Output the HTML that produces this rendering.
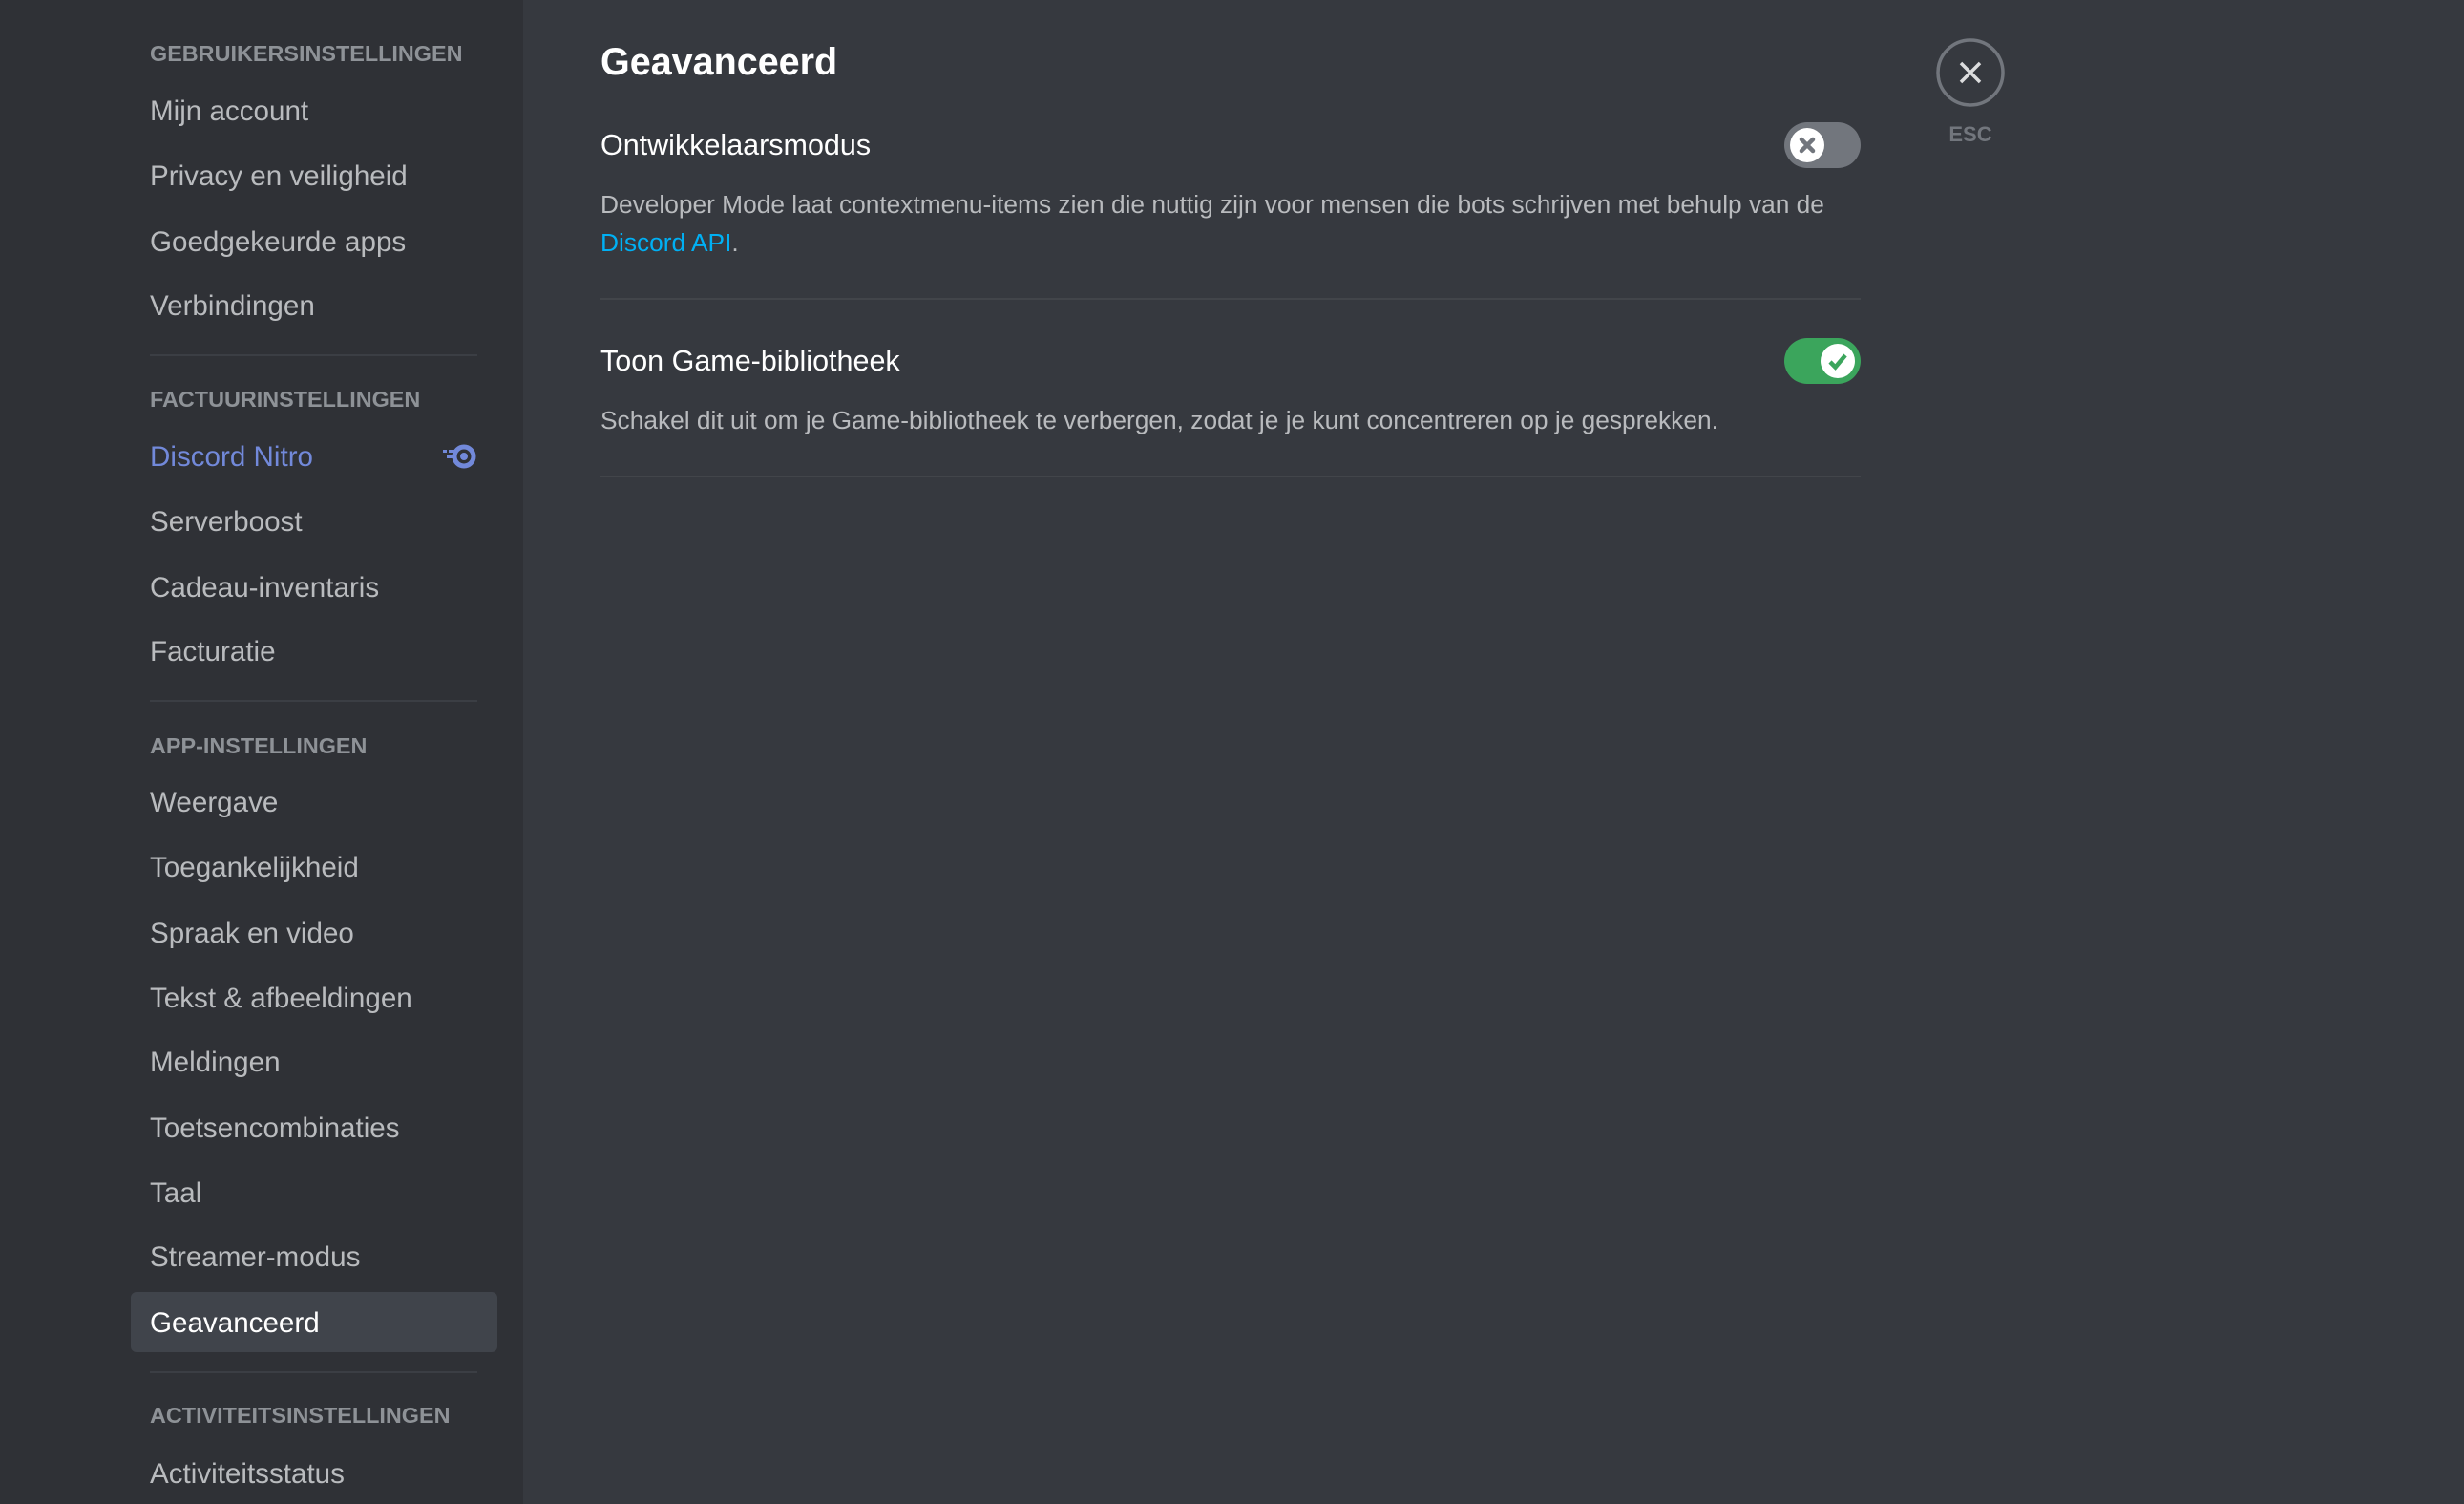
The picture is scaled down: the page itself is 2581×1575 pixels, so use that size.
<!DOCTYPE html>
<html><head><meta charset="utf-8"><style>
*{margin:0;padding:0;box-sizing:border-box}
body{width:2581px;height:1575px;background:#36393f;font-family:"Liberation Sans",sans-serif;position:relative;overflow:hidden}
#side{position:absolute;left:0;top:0;width:548px;height:1575px;background:#2f3136}
.h{position:absolute;left:157px;font-size:23.4px;font-weight:bold;color:#8e9297;line-height:30px;margin-top:-13px}
.i{position:absolute;left:157px;font-size:29.6px;color:#b9bbbe;line-height:40px;margin-top:-18px}
.sep{position:absolute;left:157px;width:343px;height:2px;background:#3b3e44}
.sel{position:absolute;left:137px;top:1353px;width:384px;height:63px;background:#40444b;border-radius:6px}
.t{position:absolute;left:629px;color:#fff}
.d{position:absolute;left:629px;font-size:26.3px;color:#b9bbbe;line-height:40px}
.rule{position:absolute;left:629px;width:1320px;height:2px;background:#42454a}
.tg{position:absolute;left:1869px;width:80px;height:48px;border-radius:24px}
</style></head><body>
<div id="side">
<div class="h" style="top:54px">GEBRUIKERSINSTELLINGEN</div>
<div class="i" style="top:115px">Mijn account</div>
<div class="i" style="top:183px">Privacy en veiligheid</div>
<div class="i" style="top:252px">Goedgekeurde apps</div>
<div class="i" style="top:319px">Verbindingen</div>
<div class="sep" style="top:371px"></div>
<div class="h" style="top:416px">FACTUURINSTELLINGEN</div>
<div class="i" style="top:477px;color:#7289da">Discord Nitro</div>
<svg style="position:absolute;left:462px;top:464px" width="38" height="28" viewBox="0 0 38 28"><circle cx="24" cy="14" r="10" fill="none" stroke="#7289da" stroke-width="5"/><circle cx="24" cy="14" r="4" fill="#7289da"/><rect x="2" y="7" width="4" height="3" fill="#7289da"/><rect x="8" y="7" width="8" height="3" fill="#7289da"/><rect x="6" y="13" width="8" height="3" fill="#7289da"/></svg>
<div class="i" style="top:545px">Serverboost</div>
<div class="i" style="top:614px">Cadeau-inventaris</div>
<div class="i" style="top:681px">Facturatie</div>
<div class="sep" style="top:733px"></div>
<div class="h" style="top:779px">APP-INSTELLINGEN</div>
<div class="i" style="top:839px">Weergave</div>
<div class="i" style="top:907px">Toegankelijkheid</div>
<div class="i" style="top:976px">Spraak en video</div>
<div class="i" style="top:1044px">Tekst &amp; afbeeldingen</div>
<div class="i" style="top:1111px">Meldingen</div>
<div class="i" style="top:1180px">Toetsencombinaties</div>
<div class="i" style="top:1248px">Taal</div>
<div class="i" style="top:1315px">Streamer-modus</div>
<div class="sel"></div>
<div class="i" style="top:1384px;color:#fff">Geavanceerd</div>
<div class="sep" style="top:1436px"></div>
<div class="h" style="top:1480px">ACTIVITEITSINSTELLINGEN</div>
<div class="i" style="top:1542px">Activiteitsstatus</div>
</div>

<div class="t" style="top:42px;font-size:39.5px;font-weight:bold;line-height:46px">Geavanceerd</div>
<div class="t" style="top:135px;font-size:30.5px;line-height:34px">Ontwikkelaarsmodus</div>
<div class="d" style="top:194px">Developer Mode laat contextmenu-items zien die nuttig zijn voor mensen die bots schrijven met behulp van de<br><span style="color:#00b0f4">Discord API</span>.</div>
<div class="rule" style="top:312px"></div>
<div class="t" style="top:361px;font-size:30.5px;line-height:34px">Toon Game-bibliotheek</div>
<div class="d" style="top:420px">Schakel dit uit om je Game-bibliotheek te verbergen, zodat je je kunt concentreren op je gesprekken.</div>
<div class="rule" style="top:498px"></div>

<div class="tg" style="top:128px;background:#72767d"><svg style="position:absolute;left:6px;top:6px" width="36" height="36" viewBox="0 0 36 36"><circle cx="18" cy="18" r="18" fill="#fff"/><path d="M12 12L24 24M24 12L12 24" stroke="#72767d" stroke-width="4.5" stroke-linecap="round"/></svg></div>
<div class="tg" style="top:354px;background:#3ba55c"><svg style="position:absolute;left:38px;top:6px" width="36" height="36" viewBox="0 0 36 36"><circle cx="18" cy="18" r="18" fill="#fff"/><path d="M10 19L15.5 24.5L26 12" fill="none" stroke="#3ba55c" stroke-width="4.5"/></svg></div>

<svg style="position:absolute;left:2028px;top:40px" width="72" height="72" viewBox="0 0 72 72"><circle cx="36" cy="36" r="34" fill="none" stroke="#72767d" stroke-width="3.5"/><path d="M26 26L46 46M46 26L26 46" stroke="#dcddde" stroke-width="3.5"/></svg>
<div style="position:absolute;left:2028px;width:72px;top:128px;text-align:center;font-size:22px;font-weight:bold;color:#72767d">ESC</div>
</body></html>
